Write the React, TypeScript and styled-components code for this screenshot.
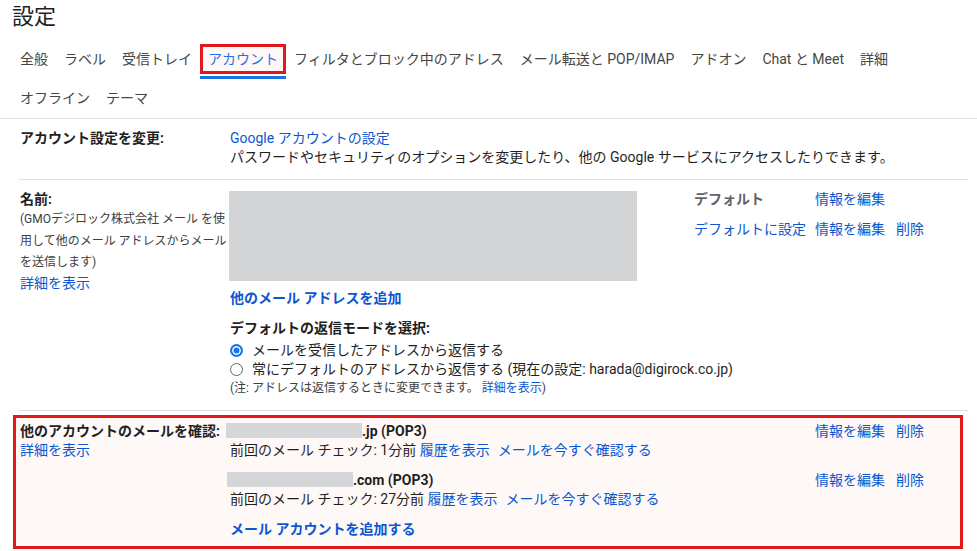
import React from "react";
import styled, { createGlobalStyle, css } from "styled-components";

const GlobalStyle = createGlobalStyle`
  html, body { margin: 0; padding: 0; background: #ffffff; }
  body {
    font-family: Roboto, "Noto Sans CJK JP", "Noto Sans", sans-serif;
    color: #1f1f1f;
    font-size: 14px;
  }
  * { box-sizing: border-box; }
`;

const RED = "#e3181d";
const BLUE = "#1a73e8";
const LINK = "#0b57d0";

const Page = styled.div`
  width: 977px;
  height: 551px;
  overflow: hidden;
`;

const Title = styled.h1`
  margin: 0 0 6px;
  padding-left: 12px;
  font-size: 22px;
  font-weight: 400;
  line-height: 34px;
  color: #1f1f1f;
`;

const Tabs = styled.nav`
  padding-left: 12px;
  border-bottom: 1px solid #e0e0e0;
`;

const TabRow = styled.div`
  display: flex;
  height: 39px;
`;

const Tab = styled.div<{ $active?: boolean }>`
  padding: 4px 0 2px;
  border-bottom: 3px solid ${(p) => (p.$active ? BLUE : "transparent")};
  color: ${(p) => (p.$active ? BLUE : "#444746")};
`;

const TabLabel = styled.span<{ $marked?: boolean }>`
  display: flex;
  align-items: center;
  height: 30px;
  padding: 0 5px;
  border: 3px solid ${(p) => (p.$marked ? RED : "transparent")};
  background: ${(p) => (p.$marked ? "#fff8f7" : "transparent")};
  white-space: nowrap;
  line-height: 20px;
`;

const Settings = styled.div`
  padding: 0 9px 0 19px;
`;

const Row = styled.section<{ $marked?: boolean }>`
  display: grid;
  grid-template-columns: 210px 464px 1fr;
  padding: 10px 0 12px 1px;
  border-bottom: 1px solid #e0e0e0;
  line-height: 19px;
  ${(p) =>
    p.$marked &&
    css`
      margin: 4px 5px 0 -6px;
      border: 3px solid ${RED};
      background: #fef8f6;
      padding: 4px 0 7px 4px;
    `}
`;

const LabelCol = styled.div`
  display: flex;
  flex-direction: column;
`;

const LabelTitle = styled.div`
  font-weight: 700;
  color: #1f1f1f;
  white-space: nowrap;
`;

const LabelNote = styled.div`
  font-size: 12px;
  line-height: 21.5px;
  color: #3c4043;
`;

const Wide = styled.div`
  grid-column: 2 / -1;
`;

const Content = styled.div`
  display: flex;
  flex-direction: column;
  align-items: flex-start;
`;

const Link = styled.a<{ $bold?: boolean; $space?: number }>`
  color: ${LINK};
  text-decoration: none;
  cursor: pointer;
  white-space: nowrap;
  font-weight: ${(p) => (p.$bold ? 700 : 400)};
  margin-left: ${(p) => p.$space ?? 0}px;
`;

const Text = styled.div`
  white-space: nowrap;
  color: #1f1f1f;
`;

const NameBox = styled.div`
  width: 408px;
  height: 90px;
  margin: 1px 0 0 -1px;
  background: #d3d4d6;
`;

const Block = styled.div<{ $gap: number }>`
  margin-top: ${(p) => p.$gap}px;
  display: flex;
  flex-direction: column;
  align-items: flex-start;
`;

const Subtitle = styled.div`
  font-weight: 700;
  white-space: nowrap;
`;

const RadioLine = styled.label`
  display: flex;
  align-items: center;
  gap: 9px;
  white-space: nowrap;
`;

const Radio = styled.span<{ $checked?: boolean }>`
  width: 13px;
  height: 13px;
  border-radius: 50%;
  flex: none;
  ${(p) =>
    p.$checked
      ? css`
          border: 2px solid ${BLUE};
          background: ${BLUE};
          box-shadow: inset 0 0 0 1.5px #fff;
        `
      : css`
          border: 1px solid #5f6368;
          background: #fff;
        `}
`;

const Note = styled.div`
  font-size: 12px;
  color: #3c4043;
  white-space: nowrap;
`;

const ActionGrid = styled.div`
  display: grid;
  grid-template-columns: 121px 81px auto;
  row-gap: 11px;
  align-content: start;
  white-space: nowrap;
`;

const DefaultTag = styled.span`
  font-weight: 700;
  color: #5f6368;
`;

const AccountList = styled.div`
  display: flex;
  flex-direction: column;
  align-items: flex-start;
  gap: 11px;
`;

const AccountBlock = styled.div`
  display: grid;
  grid-template-columns: 464px 1fr;
  width: 100%;
`;

const AccountName = styled.div`
  font-weight: 700;
  white-space: nowrap;
`;

const Redact = styled.span<{ $w: number; $shift: number }>`
  display: inline-block;
  vertical-align: top;
  width: ${(p) => p.$w}px;
  height: 15px;
  margin: 1px 0 0 ${(p) => p.$shift}px;
  background: #d5d6d8;
`;

const tabsRow1 = [
  "全般",
  "ラベル",
  "受信トレイ",
  "アカウント",
  "フィルタとブロック中のアドレス",
  "メール転送と POP/IMAP",
  "アドオン",
  "Chat と Meet",
  "詳細",
];
const tabsRow2 = ["オフライン", "テーマ"];

const accounts = [
  { w: 136, shift: -4, domain: ".jp (POP3)", ago: "1分前" },
  { w: 126, shift: -3, domain: ".com (POP3)", ago: "27分前" },
];

export default function App() {
  return (
    <Page>
      <GlobalStyle />
      <Title>設定</Title>
      <Tabs>
        <TabRow>
          {tabsRow1.map((t) => (
            <Tab key={t} $active={t === "アカウント"}>
              <TabLabel $marked={t === "アカウント"}>{t}</TabLabel>
            </Tab>
          ))}
        </TabRow>
        <TabRow>
          {tabsRow2.map((t) => (
            <Tab key={t}>
              <TabLabel>{t}</TabLabel>
            </Tab>
          ))}
        </TabRow>
      </Tabs>

      <Settings>
        <Row>
          <LabelCol>
            <LabelTitle>アカウント設定を変更:</LabelTitle>
          </LabelCol>
          <Wide>
            <Link>Google アカウントの設定</Link>
            <Text>
              パスワードやセキュリティのオプションを変更したり、他の Google サービスにアクセスしたりできます。
            </Text>
          </Wide>
        </Row>

        <Row>
          <LabelCol>
            <LabelTitle>名前:</LabelTitle>
            <LabelNote>
              (GMOデジロック株式会社 メール を使用して他のメール アドレスからメールを送信します)
            </LabelNote>
            <div>
              <Link>詳細を表示</Link>
            </div>
          </LabelCol>
          <Content>
            <NameBox />
            <Block $gap={8}>
              <Link $bold>他のメール アドレスを追加</Link>
            </Block>
            <Block $gap={11}>
              <Subtitle>デフォルトの返信モードを選択:</Subtitle>
              <Block $gap={3}>
                <RadioLine>
                  <Radio $checked />
                  メールを受信したアドレスから返信する
                </RadioLine>
                <RadioLine>
                  <Radio />
                  常にデフォルトのアドレスから返信する (現在の設定: harada@digirock.co.jp)
                </RadioLine>
                <Note>
                  (注: アドレスは返信するときに変更できます。 <Link>詳細を表示</Link>)
                </Note>
              </Block>
            </Block>
          </Content>
          <ActionGrid>
            <DefaultTag>デフォルト</DefaultTag>
            <Link>情報を編集</Link>
            <span />
            <Link>デフォルトに設定</Link>
            <Link>情報を編集</Link>
            <Link>削除</Link>
          </ActionGrid>
        </Row>

        <Row $marked>
          <LabelCol>
            <LabelTitle>他のアカウントのメールを確認:</LabelTitle>
            <div>
              <Link>詳細を表示</Link>
            </div>
          </LabelCol>
          <Wide>
            <AccountList>
              {accounts.map((a) => (
                <AccountBlock key={a.domain}>
                  <div>
                    <AccountName>
                      <Redact $w={a.w} $shift={a.shift} />
                      {a.domain}
                    </AccountName>
                    <Text>
                      前回のメール チェック: {a.ago} <Link>履歴を表示</Link>
                      <Link $space={8}>メールを今すぐ確認する</Link>
                    </Text>
                  </div>
                  <ActionGrid>
                    <span />
                    <Link>情報を編集</Link>
                    <Link>削除</Link>
                  </ActionGrid>
                </AccountBlock>
              ))}
              <Link $bold>メール アカウントを追加する</Link>
            </AccountList>
          </Wide>
        </Row>
      </Settings>
    </Page>
  );
}
